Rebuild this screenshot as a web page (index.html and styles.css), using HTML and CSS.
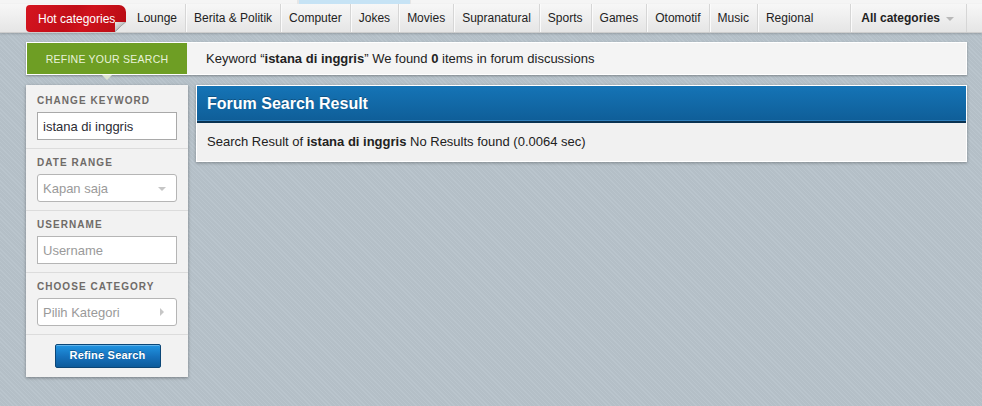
FILE: index.html
```html
<!DOCTYPE html>
<html lang="id">
<head>
<meta charset="utf-8">
<title>Forum Search</title>
<link rel="stylesheet" href="styles.css">
</head>
<body>
<div class="topstrip"><div class="topstrip-tab"></div></div>
<nav class="nav">
  <div class="nav-inner">
    <a class="hot">Hot categories</a>
    <a class="nav-item first">Lounge</a>
    <a class="nav-item">Berita &amp; Politik</a>
    <a class="nav-item">Computer</a>
    <a class="nav-item">Jokes</a>
    <a class="nav-item">Movies</a>
    <a class="nav-item">Supranatural</a>
    <a class="nav-item">Sports</a>
    <a class="nav-item">Games</a>
    <a class="nav-item">Otomotif</a>
    <a class="nav-item">Music</a>
    <a class="nav-item">Regional</a>
    <a class="nav-all">All categories <span class="caret"></span></a>
  </div>
</nav>

<main class="page">
  <div class="refine-bar">
    <div class="refine-tab">REFINE YOUR SEARCH<span class="refine-arrow"></span></div>
    <div class="refine-info">Keyword “<b>istana di inggris</b>” We found <b>0</b> items in forum discussions</div>
  </div>

  <div class="content">
    <aside class="sidebar">
      <div class="side-section">
        <div class="side-label">CHANGE KEYWORD</div>
        <div class="field">istana di inggris</div>
      </div>
      <div class="side-section">
        <div class="side-label">DATE RANGE</div>
        <div class="field select muted">Kapan saja <span class="down"></span></div>
      </div>
      <div class="side-section">
        <div class="side-label">USERNAME</div>
        <div class="field muted">Username</div>
      </div>
      <div class="side-section">
        <div class="side-label">CHOOSE CATEGORY</div>
        <div class="field select muted">Pilih Kategori <span class="right"></span></div>
      </div>
      <div class="side-section button-row">
        <button class="btn">Refine Search</button>
      </div>
    </aside>

    <section class="results">
      <h2 class="results-head">Forum Search Result</h2>
      <div class="results-body">Search Result of <b>istana di inggris</b> No Results found (0.0064 sec)</div>
    </section>
  </div>
</main>
</body>
</html>
```
FILE: styles.css
```css
* { box-sizing: border-box; }
html, body { margin: 0; padding: 0; }
body {
  height: 406px;
  overflow: hidden;
  font-family: "Liberation Sans", Arial, sans-serif;
  font-size: 12px;
  color: #222;
  background-color: #b7c2ca;
  background-image: repeating-linear-gradient(45deg, #bac5cd 0 1px, #b4bfc7 1px 3px);
}

.topstrip {
  height: 4px;
  background: #f5f5f5;
  display: flex;
}
.topstrip-tab {
  margin-left: 297px;
  width: 114px;
  background: #c6e3f5;
  border-left: 2px solid #e6e6e6;
  border-right: 1px solid #e6e6e6;
}

.nav {
  height: 29px;
  background: linear-gradient(#f7f7f7, #e5e5e5);
  border-bottom: 1px solid #cdcdcd;
  box-shadow: 0 1px 2px rgba(0,0,0,0.18);
}
.nav-inner {
  margin-left: 26px;
  width: 941px;
  height: 100%;
  display: flex;
  align-items: stretch;
}
.nav-inner a { color: #222; text-decoration: none; }
.hot {
  position: relative;
  margin: 1px 3px 0 0;
  height: 27px;
  width: 100px;
  display: flex;
  align-items: center;
  padding-left: 12px;
  color: #fff !important;
  background: linear-gradient(120deg, #d51520 0%, #c20e18 45%, #d0121c 60%, #b50b13 100%);
  border-radius: 4px 7px 0 4px;
}
.hot::after {
  content: "";
  position: absolute;
  right: 0;
  bottom: 0;
  width: 11px;
  height: 10px;
  background: linear-gradient(to bottom right, #e9e9e9 0%, #c4c4c4 42%, #9e9e9e 49%, #e7e7e7 52%);
}
.nav-item {
  display: flex;
  align-items: center;
  padding: 0 8px;
  border-left: 1px solid #d6d6d6;
  box-shadow: inset 1px 0 #fbfbfb;
}
.nav-item.first { border-left: 0; box-shadow: none; padding-left: 8px; }
.nav-all {
  margin-left: auto;
  display: flex;
  align-items: center;
  padding: 0 12px 0 10px;
  font-weight: bold;
  border-left: 1px solid #d6d6d6;
  border-right: 1px solid #d6d6d6;
  box-shadow: inset 1px 0 #fbfbfb;
}
.caret {
  display: inline-block;
  margin-left: 6px;
  margin-top: 2px;
  border-top: 4px solid #b8b8b8;
  border-left: 4px solid transparent;
  border-right: 4px solid transparent;
}

.page {
  margin-left: 26px;
  width: 941px;
  padding-top: 9px;
}

.refine-bar {
  height: 33px;
  display: flex;
  align-items: stretch;
  background: #f4f4f4;
  border: 1px solid #fff;
  box-shadow: 0 1px 2px rgba(0,0,0,0.3);
}
.refine-tab {
  position: relative;
  width: 160px;
  background: #6e9e24;
  color: #e8f2d9;
  font-size: 10.5px;
  letter-spacing: 0.25px;
  display: flex;
  align-items: center;
  justify-content: center;
}
.refine-arrow {
  position: absolute;
  left: 75px;
  bottom: -6px;
  border-top: 5px solid #dce4cf;
  border-left: 5px solid transparent;
  border-right: 5px solid transparent;
}
.refine-info {
  line-height: 31px;
  padding-left: 19px;
  font-size: 13px;
  color: #222;
}

.content {
  margin-top: 10px;
  display: flex;
  align-items: flex-start;
  gap: 8px;
}

.sidebar {
  width: 162px;
  background: #f2f2f2;
  box-shadow: 0 1px 3px rgba(0,0,0,0.35);
}
.side-section {
  padding: 7px 11px 8px;
  border-top: 1px solid #dcdcdc;
}
.side-section:first-child { border-top: 0; padding-top: 9px; padding-bottom: 8px; }
.side-label {
  font-size: 10px;
  font-weight: bold;
  letter-spacing: 1.05px;
  color: #6f6b68;
  line-height: 14px;
  margin-bottom: 4px;
}
.field {
  height: 28px;
  background: #fff;
  border: 1px solid #a9a9a9;
  display: flex;
  align-items: center;
  padding-left: 5px;
  font-size: 13px;
  color: #2c2c34;
}
.field.muted { color: #9a9a9a; border-color: #b5b5b5; }
.field.select {
  border-radius: 3px;
  justify-content: space-between;
  padding-right: 10px;
}
.down {
  border-top: 4px solid #c6c6c6;
  border-left: 4px solid transparent;
  border-right: 4px solid transparent;
  margin-top: 2px;
}
.right {
  border-left: 4px solid #c6c6c6;
  border-top: 4px solid transparent;
  border-bottom: 4px solid transparent;
  margin-right: 2px;
}
.button-row {
  padding: 9px 0 9px;
  display: flex;
  justify-content: center;
}
.btn {
  width: 106px;
  height: 24px;
  margin-left: 1px;
  border: 1px solid #0b4677;
  border-radius: 2px;
  background: linear-gradient(#2195e2, #1570bb 55%, #0d5b9b);
  box-shadow: inset 0 1px rgba(255,255,255,0.3);
  color: #fff;
  font-family: "Liberation Sans", Arial, sans-serif;
  font-weight: bold;
  font-size: 11px;
  letter-spacing: 0.2px;
  padding: 0 0 2px;
  text-shadow: 0 -1px 0 rgba(0,0,0,0.3);
}

.results {
  flex: 1;
  border: 1px solid #fff;
  background: #f1f1f1;
  box-shadow: 0 1px 3px rgba(0,0,0,0.3);
}
.results-head {
  margin: 0;
  height: 37px;
  padding: 0 10px;
  line-height: 36px;
  font-size: 16px;
  font-weight: bold;
  color: #fff;
  background: linear-gradient(#1574b6, #0f5e98);
  border-bottom: 2px solid #0a3352;
  box-shadow: inset 0 -1px 0 #2f7fbc;
  text-shadow: 0 -1px 0 rgba(0,0,0,0.25);
}
.results-body {
  height: 38px;
  line-height: 38px;
  padding: 0 10px;
  font-size: 13px;
  color: #222;
}
```
